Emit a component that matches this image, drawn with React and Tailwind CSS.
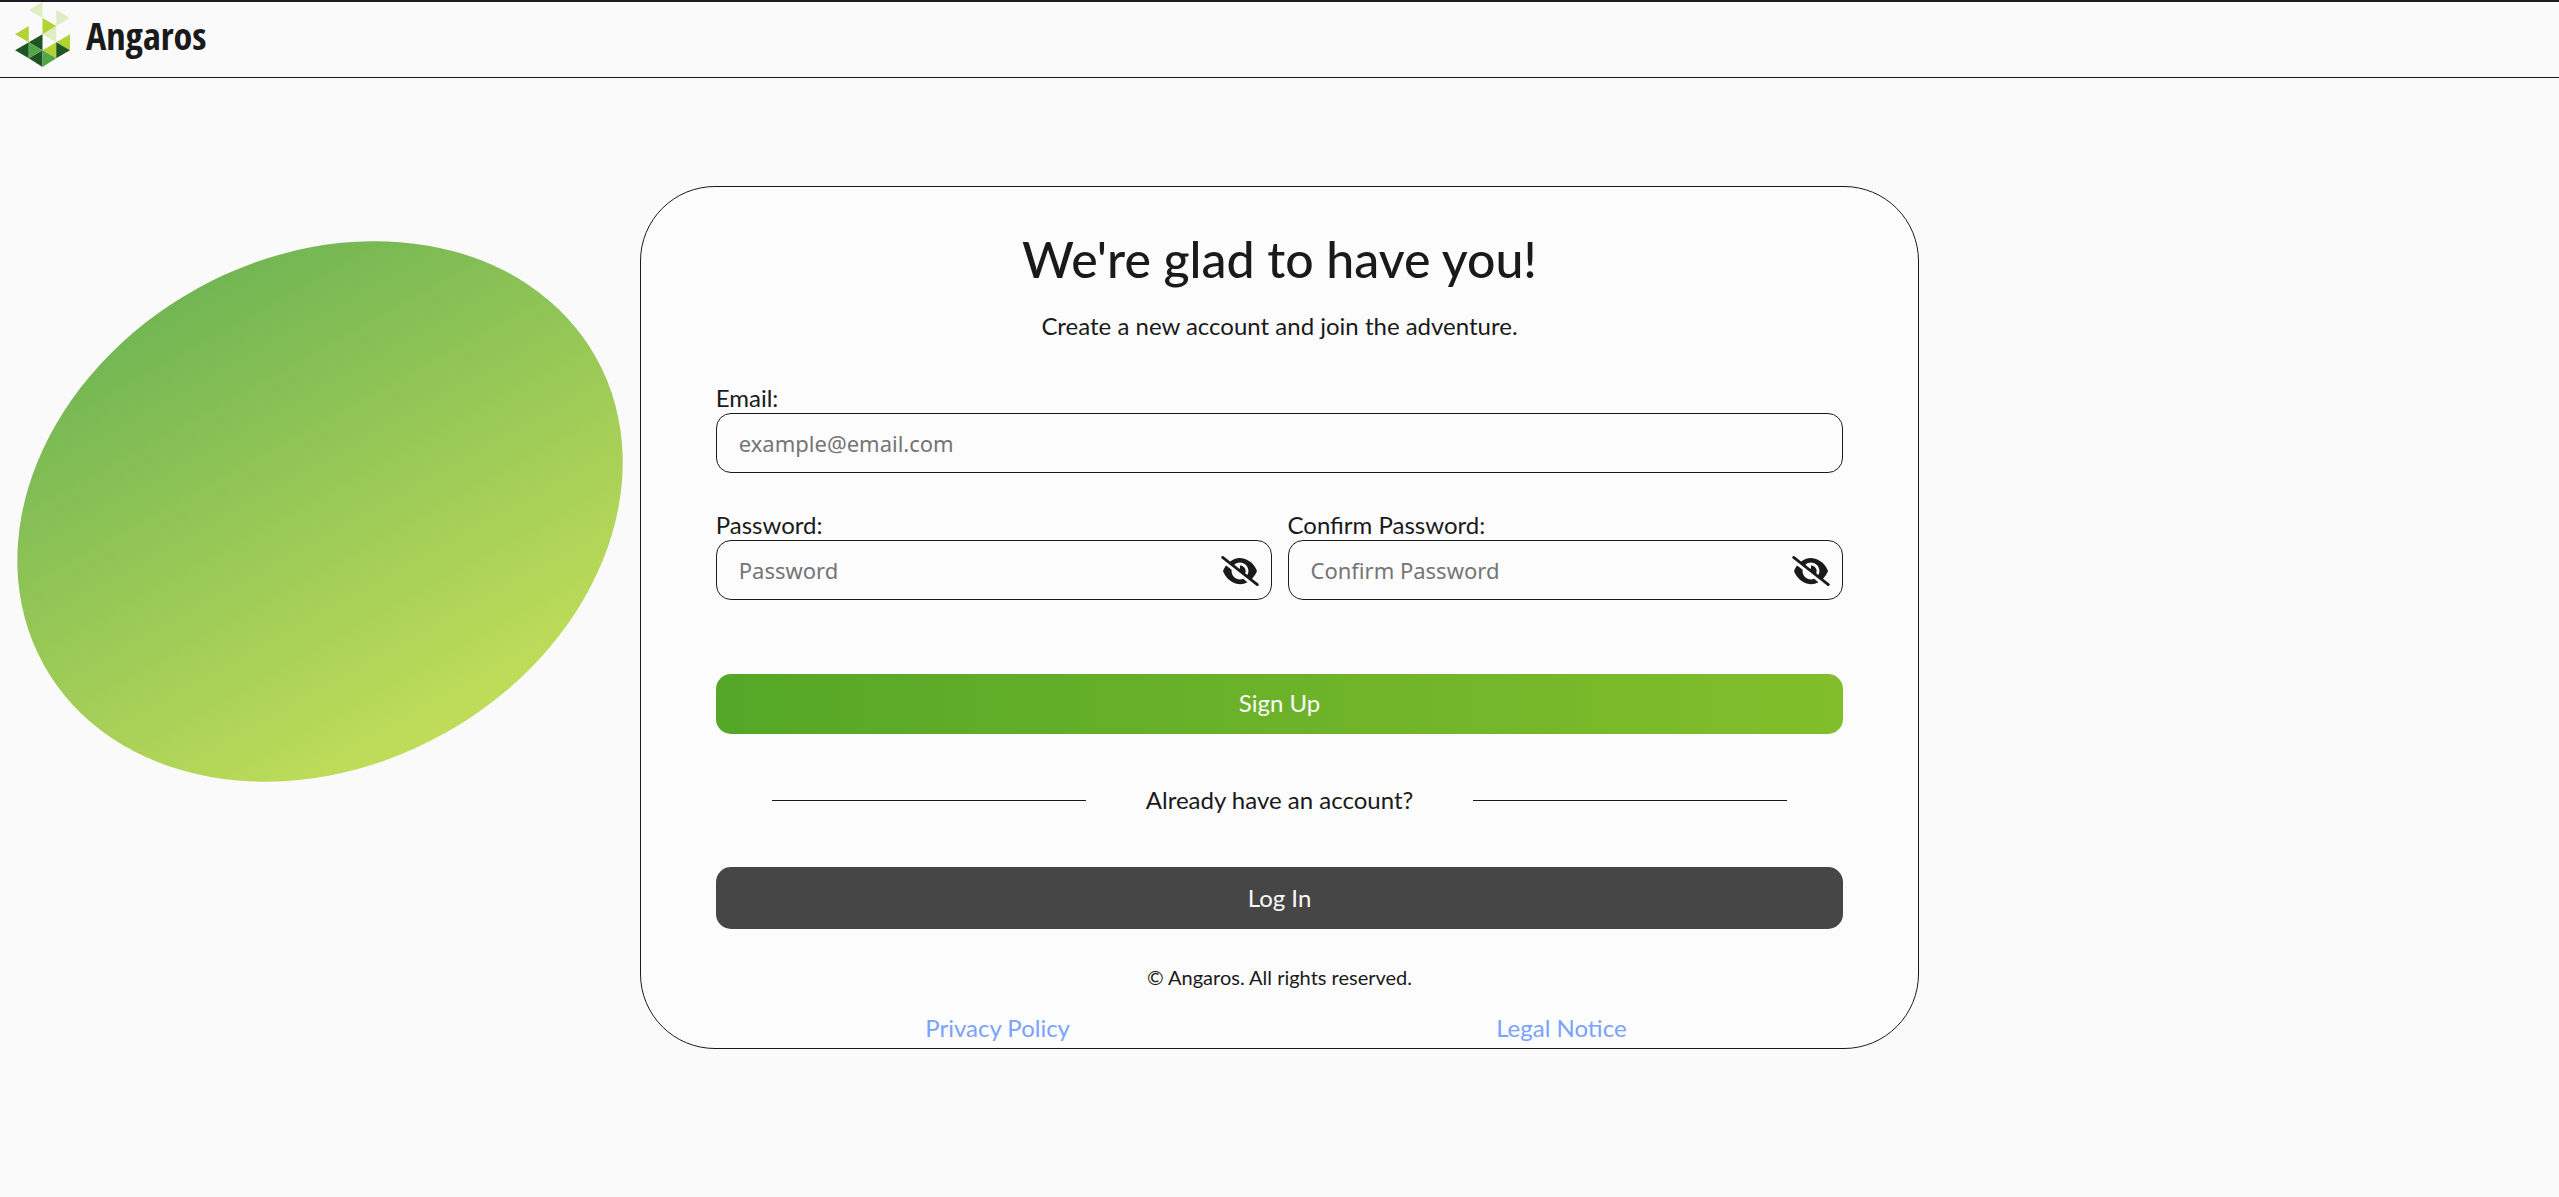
import React, { useState } from "react";
import { FaEye, FaEyeSlash } from "react-icons/fa6";

function Logo() {
  return (
    <svg viewBox="0 0 164 194" className="h-[65px] w-[55px] shrink-0" aria-hidden="true">
      <g fill="#deedc4">
        <path d="M41 24 82 0v48z" />
        <path d="M123 24l41 24-41 24z" />
        <path d="M82 96l41-24v48z" />
      </g>
      <g fill="#b3d236">
        <path d="M82 48l41 24-41 24z" />
        <path d="M0 96l41-24v48z" />
        <path d="M82 144l41-24v48z" />
        <path d="M123 120l41-24v48z" />
      </g>
      <g fill="#1f5424">
        <path d="M41 120l41-24v48z" />
        <path d="M0 144l41-24v48z" />
        <path d="M41 168l41-24v50z" />
        <path d="M123 120l41 24-41 24z" />
      </g>
      <g fill="#53a548">
        <path d="M41 120l41 24-41 24z" />
        <path d="M82 144l41 24-41 26z" />
      </g>
    </svg>
  );
}

function Field({ id, label, type, placeholder, children }) {
  return (
    <div className="flex min-w-0 flex-1 flex-col">
      <label htmlFor={id} className="text-2xl leading-[30px]">
        {label}
      </label>
      <div className="flex h-[60px] items-center rounded-[15px] border border-[#1a1a1a] pr-3 pl-[22px]">
        <input
          id={id}
          type={type}
          placeholder={placeholder}
          className="h-full min-w-0 flex-1 bg-transparent font-['Noto_Sans',sans-serif] text-[22px] outline-none placeholder:text-[#757575]"
        />
        {children}
      </div>
    </div>
  );
}

function PasswordField({ id, label, placeholder }) {
  const [visible, setVisible] = useState(false);
  const Icon = visible ? FaEye : FaEyeSlash;
  return (
    <Field id={id} label={label} placeholder={placeholder} type={visible ? "text" : "password"}>
      <button
        type="button"
        aria-label={visible ? "Hide password" : "Show password"}
        onClick={() => setVisible(!visible)}
        className="shrink-0 pt-0.5"
      >
        <Icon className="h-[30px] w-[38px]" />
      </button>
    </Field>
  );
}

export default function App() {
  return (
    <div className="min-h-screen overflow-x-hidden bg-[#fafafa] font-['Lato',sans-serif] text-[#1a1a1a]">
      <header className="flex h-[78px] items-start border-t-2 border-b border-t-[#1c1a22] border-b-[#1a1a1a] pl-[15px]">
        <a href="#" className="flex items-center gap-4">
          <Logo />
          <span className="font-['Open_Sans_Condensed','Roboto_Condensed',sans-serif] text-[38px] leading-10 font-bold">
            Angaros
          </span>
        </a>
      </header>

      <main className="grid grid-cols-[1fr_2fr_1fr] items-start pt-[108px]">
        <div className="px-1 pt-[71px]">
          <div
            aria-hidden="true"
            className="aspect-[632/509] w-full rotate-[-29deg] rounded-[50%] bg-linear-to-b from-[#72b653] to-[#c0dd59]"
          />
        </div>

        <section className="rounded-[75px] border border-[#1a1a1a] bg-[#fcfcfc] px-[75px] pt-[42px] pb-[5px]">
          <h1 className="text-center text-[50px] leading-[60px] font-medium">We're glad to have you!</h1>
          <p className="mt-[22px] text-center text-2xl leading-[30px]">
            Create a new account and join the adventure.
          </p>

          <form className="mt-[42px]" onSubmit={(e) => e.preventDefault()}>
            <Field id="email" label="Email:" type="email" placeholder="example@email.com" />
            <div className="mt-[37px] flex gap-4">
              <PasswordField id="password" label="Password:" placeholder="Password" />
              <PasswordField id="confirm" label="Confirm Password:" placeholder="Confirm Password" />
            </div>
            <button
              type="submit"
              className="mt-[74px] h-[60px] w-full rounded-[15px] bg-linear-to-r from-[#54a727] to-[#82be2b] pb-0.5 text-2xl text-[#fafafa]"
            >
              Sign Up
            </button>
          </form>

          <div className="mt-[51px] flex items-center gap-[60px] px-14">
            <div className="h-px flex-1 bg-[#1a1a1a]" />
            <p className="text-2xl leading-[30px]">Already have an account?</p>
            <div className="h-px flex-1 bg-[#1a1a1a]" />
          </div>

          <button
            type="button"
            className="mt-[52px] h-[62px] w-full rounded-[15px] bg-[#464646] text-2xl text-[#fafafa]"
          >
            Log In
          </button>

          <footer className="mt-9">
            <p className="text-center text-xl leading-6">© Angaros. All rights reserved.</p>
            <nav className="mt-6 grid grid-cols-2 justify-items-center text-2xl leading-[30px] text-[#7aa2ff]">
              <a href="#privacy">Privacy Policy</a>
              <a href="#legal">Legal Notice</a>
            </nav>
          </footer>
        </section>
      </main>
    </div>
  );
}
